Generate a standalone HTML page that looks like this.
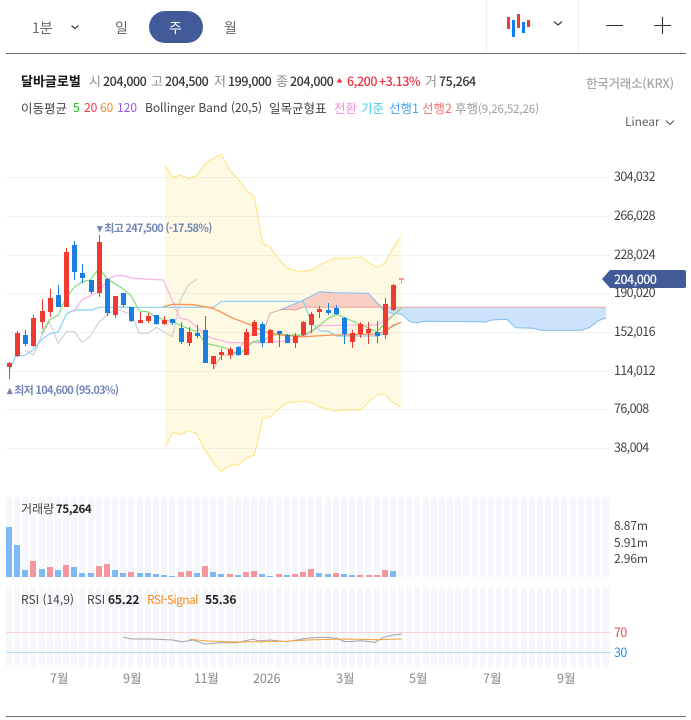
<!DOCTYPE html>
<html lang="ko"><head><meta charset="utf-8"><title>Chart</title>
<style>
html,body{margin:0;padding:0;background:#fff}
body{width:691px;height:720px;position:relative;overflow:hidden;font-family:"Noto Sans CJK KR","Liberation Sans",sans-serif;font-size:12px;color:#333}
span.t{position:absolute;white-space:nowrap;line-height:18px;height:18px}
svg{position:absolute;left:0;top:0}
.g{color:#8a8d92}.k{color:#333}.b{font-weight:700}
.n{font-weight:500;color:#333;font-size:12.5px;letter-spacing:-.45px}
.r{font-weight:500;color:#f0303c;font-size:12.5px;letter-spacing:-.45px}
.y{font-size:12.5px;color:#444;left:614px;letter-spacing:-.6px}
.x{font-size:12.5px;color:#888;top:669px}
.h{font-size:12.5px}
.l{font-size:11px;font-weight:700;color:#7585b8;letter-spacing:-.7px}
</style></head><body>
<svg width="691" height="720" viewBox="0 0 691 720" fill="none">
<rect x="149" y="11" width="54" height="32" rx="16" fill="#405b98"/>
<path d="M6 53.500H686" stroke="#5f6b73"/>
<path d="M486.500 0V53M578.500 0V53" stroke="#eceef1"/>
<path d="M507 17h3v12h-3zM517 14h3v14h-3zM527 20h3v7h-3z" fill="#ee3a3c"/>
<path d="M512 20h3v17h-3zM522 22h3v11h-3z" fill="#0f7fee"/>
<path d="M554 21.500l4 3.500 4-3.500" stroke="#444" stroke-width="1.300"/>
<path d="M71.500 25.500l3.500 3 3.500-3" stroke="#444" stroke-width="1.300"/>
<path d="M666 120.500l4 4 4-4" stroke="#555" stroke-width="1.100"/>
<path d="M606 25.500H623M654 25.500H671M662.500 17V34" stroke="#333" stroke-width="1.100"/>
<path d="M336.500 82.500l3-4.500 3 4.500z" fill="#f0303c"/>

<path d="M7 177.500H610M7 216.500H610M7 255.500H610M7 293.500H610M7 332.500H610M7 371.500H610M7 409.500H610M7 448.500H610" stroke="#eff1f5"/>
<path d="M165 165.300L172.700 177.300 180.700 175 188.700 178.300 196.700 175.700 205 164 213.300 158.300 221.300 154 229.300 169.300 237.300 178.300 246.700 190.700 254.300 196.700 262.700 243.700 270 246.700 278.300 258.300 287.300 268 295.300 270.700 303.300 271.300 311.700 270 320.700 264.300 335.300 258 351.700 258 360.700 257 368.700 262.700 376.700 267.300 385 263 392.700 248.300 400.700 236.700V407L392.700 402.300 385 394 376.700 395 368.700 401.700 360.700 410 343.300 410 335.300 411.300 320.700 407.300 311.700 402.700 303.300 401.300 287.300 402.700 279.300 408.300 270.700 416.700 262.700 418.700 254.300 455 246.700 458.300 238.300 464.700 229.300 465.700 221.300 471.300 213.300 462.700 205 450 196.700 434 188.700 430.300 180.700 434.700 172.700 432 165 447.300Z" fill="#fde68a" fill-opacity=".25"/>
<path d="M165 165.300L172.700 177.300 180.700 175 188.700 178.300 196.700 175.700 205 164 213.300 158.300 221.300 154 229.300 169.300 237.300 178.300 246.700 190.700 254.300 196.700 262.700 243.700 270 246.700 278.300 258.300 287.300 268 295.300 270.700 303.300 271.300 311.700 270 320.700 264.300 335.300 258 351.700 258 360.700 257 368.700 262.700 376.700 267.300 385 263 392.700 248.300 400.700 236.700" stroke="#ffe27a"/>
<path d="M165 447.300L172.700 432 180.700 434.700 188.700 430.300 196.700 434 205 450 213.300 462.700 221.300 471.300 229.300 465.700 238.300 464.700 246.700 458.300 254.300 455 262.700 418.700 270.700 416.700 279.300 408.300 287.300 402.700 303.300 401.300 311.700 402.700 320.700 407.300 335.300 411.300 343.300 410 360.700 410 368.700 401.700 376.700 395 385 394 392.700 402.300 400.700 407" stroke="#ffe27a"/>

<path d="M280 310L300 301.700 320 291.700 333.300 292.700 368.300 293.300 383.300 307.300H303.300L295 310Z" fill="#f9cfc3"/>
<path d="M383.300 307.300H606V318L598.300 320.700 590 327.300 581.700 330.300 540 330.300 533.300 328.300 516 327.700 506.700 319.300 491.700 320 485 322.300 480 321.700 425 321.300 416.700 323 410 321.700 401.700 314.300 391.700 313.300Z" fill="#cde2fb"/>
<path d="M280 310L300 301.700 320 291.700 333.300 292.700 368.300 293.300 383.300 310 391.700 313.300 401.700 314.300 410 321.700 416.700 323 425 321.300 480 321.700 485 322.300 491.700 320 506.700 319.300 516 327.700 533.300 328.300 540 330.300 581.700 330.300 590 327.300 598.300 320.700 606 318" stroke="#7fbcf3"/>
<path d="M213.300 369.300L221.500 355 233.300 355 250 335 263.300 333.300 270 313.300 281.700 309.300 295 310 303.300 307.300H606" stroke="#e89a9a" stroke-opacity=".9"/>

<path d="M25 350L33.300 355 41.300 336.700 49.300 321.700 58.300 343.300 66.300 331.700 74.300 331.700 82.300 342.700 90.300 336 99.300 321.700 107.300 315 115.300 309 131.300 314 139.300 333.300 148.300 333.300 156.300 327.300 172.300 336.700 180.300 300 188.300 285 197.300 279" stroke="#c9c9cc"/>
<path d="M9.300 370L16 355.700 24 355.700 33.300 350 41.300 340 49.300 334 58.300 332 66.300 314 74.300 310 91.700 310 99.300 307.300 213.300 307.300 221.500 301.300 303.300 301.300 311.700 323.300 320 330.700 328.300 331.300 336.700 336 376.700 336 383.300 334 386.700 330 401 322" stroke="#86d0f5" stroke-width="1.200"/>
<path d="M74 311.700L81.700 300 99.300 291.700 107.300 280 115.300 275.700 123.300 275.700 133.300 278.300 163.300 280 180 318.300 188.300 320 200 330 210 337.700 230 342.700 253.300 342.700 280 341.700 296.700 338.300 310 333.300 320 325.700 360 325 376.700 325 393.300 315 401 309" stroke="#fcb6e2" stroke-width="1.300"/>
<path d="M41.300 334L49.300 320 58.300 315 66.300 297.300 74.300 287.300 82.300 281.700 90.300 280 99.300 268.300 107.300 279 115.300 284 123.300 289 131.300 296 139.300 311 148.300 312 156.300 317.300 172.300 321.700 188.300 328.700 197.300 331.700 205.300 343.300 213.300 345 226.700 348.300 238.300 355 253.300 341.700 263.300 340 276.700 334 290 335 303.300 335 313.300 330 328.300 318.300 336.700 314.300 350 320 360 324.300 376.700 331.700 386.700 321.700 401.300 307.700" stroke="#7fdc7b" stroke-width="1.200"/>
<path d="M163.300 306.700L173.300 304.300 193.300 304.700 213.300 308.300 233.300 318.300 246.700 323.300 255 326.700 263.300 331.700 280 335 303.300 336.700 333.300 335 376.700 334 385 331.700 393.300 325 401.300 322.300" stroke="#f99255" stroke-width="1.300"/>

<g shape-rendering="crispEdges">
<path stroke="#ee3a30" d="M9.500 362V379M17.500 331V357M33.500 315V347M42.500 299V329M50.500 289V317M66.500 248V307M99.500 235V297M115.500 296V318M140.500 312V323M148.500 313V323M164.500 316V325M189.500 327V346M213.500 356V369M221.500 349V360M230.500 347V359M246.500 329V355M254.500 320V336M270.500 329V343M295.500 333V348M303.500 321V336M311.500 312V333M319.500 306V318M352.500 330V348M360.500 322V338M368.500 322V344M385.500 298V339M393.500 284V311"/>
<path stroke="#1c7ede" d="M25.500 330V346M58.500 285V307M74.500 241V280M82.500 264V283M91.500 280V294M107.500 278V316M123.500 293V307M131.500 307V322M156.500 315V325M172.500 319V325M181.500 322V344M197.500 325V338M205.500 316V363M238.500 346V356M262.500 322V347M279.500 331V347M287.500 334V343M328.500 303V315M336.500 305V315M344.500 317V344M377.500 321V343"/>
<path fill="#ee3a30" d="M7 363h5v4h-5zM15 333h5v23h-5zM31 318h5v28h-5zM40 311h5v11h-5zM48 298h5v14h-5zM64 252h5v55h-5zM97 242h5v51h-5zM113 296h5v19h-5zM138 320h5v3h-5zM146 316h5v5h-5zM162 320h5v4h-5zM187 332h5v11h-5zM211 356h5v8h-5zM219 352h5v3h-5zM228 349h5v6h-5zM244 332h5v23h-5zM252 322h5v14h-5zM268 330h5v13h-5zM293 336h5v7h-5zM301 322h5v13h-5zM309 314h5v11h-5zM317 309h5v3h-5zM350 333h5v9h-5zM358 324h5v10h-5zM366 329h5v4h-5zM383 304h5v31h-5zM391 285h5v25h-5z"/>
<path fill="#1c7ede" d="M23 335h5v9h-5zM56 295h5v12h-5zM72 245h5v27h-5zM80 273h5v5h-5zM89 280h5v12h-5zM105 279h5v34h-5zM121 293h5v12h-5zM129 307h5v14h-5zM154 315h5v9h-5zM170 319h5v4h-5zM179 328h5v14h-5zM195 333h5v3h-5zM203 330h5v33h-5zM236 347h5v8h-5zM260 324h5v19h-5zM277 331h5v3h-5zM285 335h5v8h-5zM326 310h5v3h-5zM334 308h5v6h-5zM342 318h5v16h-5zM375 332h5v4h-5z"/>
<path fill="#f49a94" d="M399 278h5v2h-5zM401 280h1v4h-1z"/>
</g>

<defs><path id="s" fill="#f5f7fb" d="M6 0h6v80h-6zM14 0h6v80h-6zM22 0h6v80h-6zM30 0h6v80h-6zM39 0h6v80h-6zM47 0h6v80h-6zM55 0h6v80h-6zM63 0h6v80h-6zM71 0h6v80h-6zM79 0h6v80h-6zM88 0h6v80h-6zM96 0h6v80h-6zM104 0h6v80h-6zM112 0h6v80h-6zM120 0h6v80h-6zM128 0h6v80h-6zM137 0h6v80h-6zM145 0h6v80h-6zM153 0h6v80h-6zM161 0h6v80h-6zM169 0h6v80h-6zM178 0h6v80h-6zM186 0h6v80h-6zM194 0h6v80h-6zM202 0h6v80h-6zM210 0h6v80h-6zM218 0h6v80h-6zM227 0h6v80h-6zM235 0h6v80h-6zM243 0h6v80h-6zM251 0h6v80h-6zM259 0h6v80h-6zM267 0h6v80h-6zM276 0h6v80h-6zM284 0h6v80h-6zM292 0h6v80h-6zM300 0h6v80h-6zM308 0h6v80h-6zM316 0h6v80h-6zM325 0h6v80h-6zM333 0h6v80h-6zM341 0h6v80h-6zM349 0h6v80h-6zM357 0h6v80h-6zM365 0h6v80h-6zM374 0h6v80h-6zM382 0h6v80h-6zM390 0h6v80h-6zM398 0h6v80h-6zM406 0h6v80h-6zM414 0h6v80h-6zM423 0h6v80h-6zM431 0h6v80h-6zM439 0h6v80h-6zM447 0h6v80h-6zM455 0h6v80h-6zM463 0h6v80h-6zM472 0h6v80h-6zM480 0h6v80h-6zM488 0h6v80h-6zM496 0h6v80h-6zM504 0h6v80h-6zM512 0h6v80h-6zM521 0h6v80h-6zM529 0h6v80h-6zM537 0h6v80h-6zM545 0h6v80h-6zM553 0h6v80h-6zM561 0h6v80h-6zM570 0h6v80h-6zM578 0h6v80h-6zM586 0h6v80h-6zM594 0h6v80h-6zM602 0h7v80h-7z"/></defs>
<use href="#s" x="0" y="497"/><use href="#s" x="0" y="587"/>

<g shape-rendering="crispEdges">
<path fill="#7eb8f7" d="M6 527h6v50h-6zM14 545h6v32h-6zM22 570h6v7h-6zM39 569h6v8h-6zM55 570h6v7h-6zM71 567h6v10h-6zM79 573h6v4h-6zM88 573h6v4h-6zM112 570h6v7h-6zM120 573h6v4h-6zM137 573h6v4h-6zM145 573h6v4h-6zM153 574h6v3h-6zM161 575h6v2h-6zM169 576h6v1h-6zM194 573h6v4h-6zM210 572h6v5h-6zM218 574h6v3h-6zM235 575h6v2h-6zM259 574h6v3h-6zM267 576h6v1h-6zM284 575h6v2h-6zM316 573h6v4h-6zM325 574h6v3h-6zM341 574h6v3h-6zM349 575h6v2h-6zM390 571h6v6h-6z"/>
<path fill="#f2979d" d="M30 561h6v16h-6zM47 567h6v10h-6zM63 565h6v12h-6zM96 566h6v11h-6zM104 564h6v13h-6zM128 572h6v5h-6zM178 572h6v5h-6zM186 571h6v6h-6zM202 566h6v11h-6zM227 574h6v3h-6zM243 572h6v5h-6zM251 571h6v6h-6zM276 574h6v3h-6zM292 574h6v3h-6zM300 572h6v5h-6zM308 569h6v8h-6zM333 573h6v4h-6zM357 575h6v2h-6zM366 575h6v2h-6zM374 575h6v2h-6zM382 570h6v7h-6z"/>
</g>
<path d="M6 632.500H611" stroke="#fbd0d4"/>
<path d="M6 652.500H611" stroke="#bcdcfb"/>
<path d="M123.300 637.300L131.700 639 150 639 173.300 640 181.700 641.700 193.300 640 205 644 220 642.700 236.700 642.700 253.300 639 258.300 641 270 640 286.700 641.700 306.700 638.300 323.300 637.300 336.700 638.300 345 641.700 361.700 640.700 375 642.300 383.300 637.300 393.300 635 401.700 634" stroke="#a3a3a6"/>
<path d="M189.300 639.300L206.700 641 236.700 642 263.300 641.700 286.700 641.300 306.700 640 345 639 378.300 639.700 401.700 639" stroke="#f7a13e"/>
<path d="M6 716.500H686" stroke="#6b6e74"/>
<path d="M602 279L610 270H684q2 0 2 2v14q0 2-2 2H610Z" fill="#405b98"/>
</svg>

<span class="t" style="left:32px;top:19px;font-size:14px;color:#666">1분</span>
<span class="t" style="left:115px;top:19px;font-size:14px;color:#666">일</span>
<span class="t" style="left:169px;top:19px;font-size:14px;color:#fff">주</span>
<span class="t" style="left:224px;top:19px;font-size:14px;color:#666">월</span>

<span class="t b" style="left:21px;top:72px;font-size:13px;color:#111">달바글로벌</span>
<span class="t g" style="left:89px;top:72px;font-size:13px">시</span><span class="t n" style="left:103px;top:72px">204,000</span>
<span class="t g" style="left:151px;top:72px;font-size:13px">고</span><span class="t n" style="left:165px;top:72px">204,500</span>
<span class="t g" style="left:214px;top:72px;font-size:13px">저</span><span class="t n" style="left:228px;top:72px">199,000</span>
<span class="t g" style="left:276px;top:72px;font-size:13px">종</span><span class="t n" style="left:290px;top:72px">204,000</span>
<span class="t r" style="left:347px;top:72px">6,200</span>
<span class="t r" style="left:379px;top:72px">+3.13%</span>
<span class="t g" style="left:425px;top:72px;font-size:13px">거</span><span class="t n" style="left:439px;top:72px">75,264</span>
<span class="t" style="left:586px;top:74px;font-size:12.5px;letter-spacing:-.25px;font-weight:500;color:#a3a6aa">한국거래소(KRX)</span>

<span class="t h" style="left:21px;top:99px;color:#444">이동평균</span>
<span class="t" style="left:73px;top:99px;color:#12c312">5</span>
<span class="t" style="left:84px;top:99px;color:#f5364a">20</span>
<span class="t" style="left:100px;top:99px;color:#f7892f">60</span>
<span class="t" style="left:117px;top:99px;color:#9d55f0">120</span>
<span class="t" style="left:145px;top:99px;color:#444;letter-spacing:-.05px">Bollinger Band (20,5)</span>
<span class="t h" style="left:269px;top:99px;color:#444">일목균형표</span>
<span class="t h" style="left:334px;top:99px;color:#f78de0">전환</span>
<span class="t h" style="left:361px;top:99px;color:#49cde8">기준</span>
<span class="t h" style="left:389px;top:99px;color:#4aa3f0">선행1</span>
<span class="t h" style="left:422px;top:99px;color:#f77272">선행2</span>
<span class="t h" style="left:455px;top:99px;color:#9a9ca0">후행<span style="font-size:11.5px;letter-spacing:-.1px">(9,26,52,26)</span></span>
<span class="t" style="left:625px;top:113px;color:#666;letter-spacing:-.1px">Linear</span>

<span class="t y" style="top:167px">304,032</span>
<span class="t y" style="top:206px">266,028</span>
<span class="t y" style="top:245px">228,024</span>
<span class="t y" style="top:283px">190,020</span>
<span class="t y" style="top:322px">152,016</span>
<span class="t y" style="top:361px">114,012</span>
<span class="t y" style="top:399px">76,008</span>
<span class="t y" style="top:438px">38,004</span>
<span class="t y" style="top:270px;color:#fff;font-weight:500">204,000</span>

<span class="t l" style="left:97px;top:219px">▾ 최고 247,500 (-17.58%)</span>
<span class="t l" style="left:7px;top:381px">▴ 최저 104,600 (95.03%)</span>

<span class="t" style="left:21px;top:500px;color:#444">거래량</span>
<span class="t b" style="left:56px;top:500px;color:#222;font-size:11.5px;letter-spacing:-.4px">75,264</span>
<span class="t y" style="top:517px;font-size:12px;letter-spacing:-.1px">8.87m</span>
<span class="t y" style="top:534px;font-size:12px;letter-spacing:-.1px">5.91m</span>
<span class="t y" style="top:550px;font-size:12px;letter-spacing:-.1px">2.96m</span>

<span class="t" style="left:21px;top:591px;color:#444">RSI (14,9)</span>
<span class="t" style="left:87px;top:591px;color:#444">RSI</span>
<span class="t b" style="left:108px;top:591px;color:#222;letter-spacing:-.2px">65.22</span>
<span class="t" style="left:147px;top:591px;color:#f78a1e;letter-spacing:-.6px">RSI-Signal</span>
<span class="t b" style="left:205px;top:591px;color:#222;letter-spacing:-.2px">55.36</span>
<span class="t y" style="top:623px;color:#ee4a52">70</span>
<span class="t y" style="top:643px;color:#2a8cf0">30</span>

<span class="t x" style="left:50px">7월</span>
<span class="t x" style="left:123px">9월</span>
<span class="t x" style="left:194px;letter-spacing:-.3px">11월</span>
<span class="t x" style="left:253px;letter-spacing:-.1px">2026</span>
<span class="t x" style="left:336px">3월</span>
<span class="t x" style="left:409px">5월</span>
<span class="t x" style="left:483px">7월</span>
<span class="t x" style="left:557px">9월</span>
</body></html>
